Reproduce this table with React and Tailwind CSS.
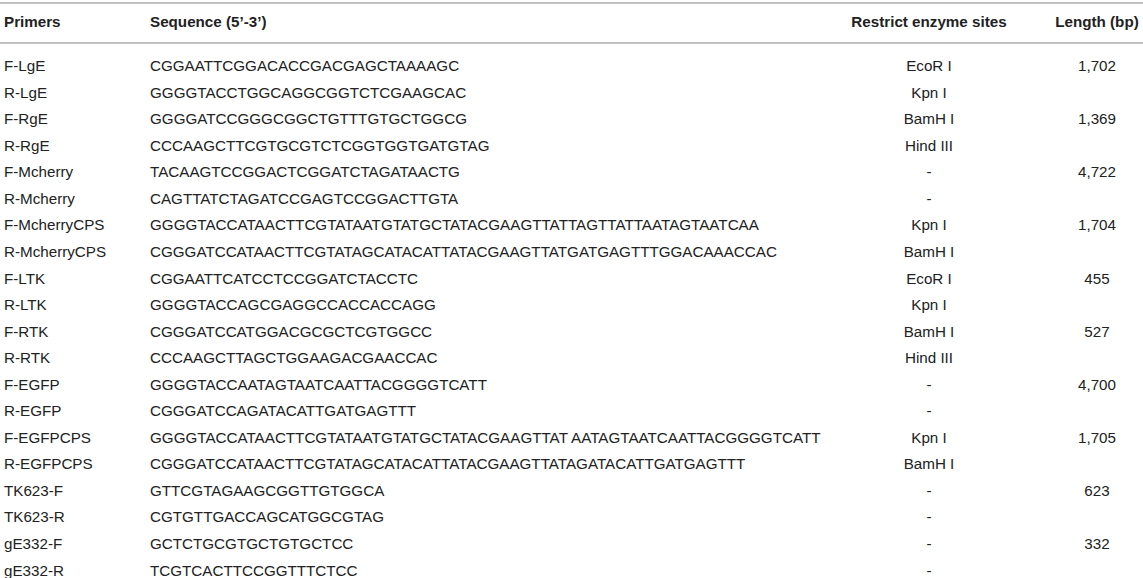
import React from "react";

const rows = [
  ["F-LgE", "CGGAATTCGGACACCGACGAGCTAAAAGC", "EcoR I", "1,702"],
  ["R-LgE", "GGGGTACCTGGCAGGCGGTCTCGAAGCAC", "Kpn I", ""],
  ["F-RgE", "GGGGATCCGGGCGGCTGTTTGTGCTGGCG", "BamH I", "1,369"],
  ["R-RgE", "CCCAAGCTTCGTGCGTCTCGGTGGTGATGTAG", "Hind III", ""],
  ["F-Mcherry", "TACAAGTCCGGACTCGGATCTAGATAACTG", "-", "4,722"],
  ["R-Mcherry", "CAGTTATCTAGATCCGAGTCCGGACTTGTA", "-", ""],
  ["F-McherryCPS", "GGGGTACCATAACTTCGTATAATGTATGCTATACGAAGTTATTAGTTATTAATAGTAATCAA", "Kpn I", "1,704"],
  ["R-McherryCPS", "CGGGATCCATAACTTCGTATAGCATACATTATACGAAGTTATGATGAGTTTGGACAAACCAC", "BamH I", ""],
  ["F-LTK", "CGGAATTCATCCTCCGGATCTACCTC", "EcoR I", "455"],
  ["R-LTK", "GGGGTACCAGCGAGGCCACCACCAGG", "Kpn I", ""],
  ["F-RTK", "CGGGATCCATGGACGCGCTCGTGGCC", "BamH I", "527"],
  ["R-RTK", "CCCAAGCTTAGCTGGAAGACGAACCAC", "Hind III", ""],
  ["F-EGFP", "GGGGTACCAATAGTAATCAATTACGGGGTCATT", "-", "4,700"],
  ["R-EGFP", "CGGGATCCAGATACATTGATGAGTTT", "-", ""],
  ["F-EGFPCPS", "GGGGTACCATAACTTCGTATAATGTATGCTATACGAAGTTAT AATAGTAATCAATTACGGGGTCATT", "Kpn I", "1,705"],
  ["R-EGFPCPS", "CGGGATCCATAACTTCGTATAGCATACATTATACGAAGTTATAGATACATTGATGAGTTT", "BamH I", ""],
  ["TK623-F", "GTTCGTAGAAGCGGTTGTGGCA", "-", "623"],
  ["TK623-R", "CGTGTTGACCAGCATGGCGTAG", "-", ""],
  ["gE332-F", "GCTCTGCGTGCTGTGCTCC", "-", "332"],
  ["gE332-R", "TCGTCACTTCCGGTTTCTCC", "-", ""],
];

function Row({ cells, bold }) {
  return (
    <div className={`flex leading-[26.55px] whitespace-pre ${bold ? "font-bold" : ""}`}>
      <div className="w-[146px] pl-[4px] box-content">{cells[0]}</div>
      <div className="w-[695px]">{cells[1]}</div>
      <div className="w-[168px] text-center">{cells[2]}</div>
      <div className="ml-[38px] w-[92px] text-center">{cells[3]}</div>
    </div>
  );
}

export default function App() {
  return (
    <div
      className="w-[1143px] h-[578px] overflow-hidden bg-white text-[#222222] text-[15.2px] pt-[2px]"
      style={{ fontFamily: '"Liberation Sans", Arial, sans-serif' }}
    >
      <div className="border-t-2 border-b-2 border-[#c2c2c2] pt-[5px] pb-[6.8px]">
        <Row bold cells={["Primers", "Sequence (5’-3’)", "Restrict enzyme sites", "Length (bp)"]} />
      </div>
      <div className="pt-[8.8px]">
        {rows.map((r) => (
          <Row key={r[0]} cells={r} />
        ))}
      </div>
    </div>
  );
}
